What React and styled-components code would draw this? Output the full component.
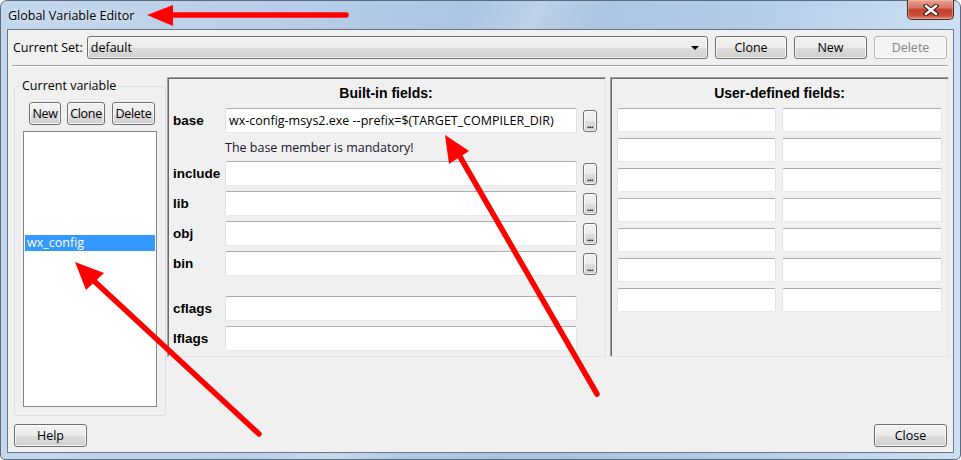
import React from 'react'
import styled, { createGlobalStyle } from 'styled-components'

const GlobalStyle = createGlobalStyle`
  html, body { margin: 0; padding: 0; background: #ffffff; }
  body {
    font-family: "Open Sans", "Noto Sans", sans-serif;
    font-size: 12.5px;
    color: #000;
  }
  * { box-sizing: border-box; }
`

const Stage = styled.div`
  position: relative;
  width: 961px;
  height: 460px;
  overflow: hidden;
`

const Window = styled.div`
  width: 961px;
  height: 460px;
  border: 1px solid #5d6c7f;
  border-radius: 7px 7px 5px 5px;
  background:
    linear-gradient(115deg, rgba(255,255,255,0) 40%, rgba(255,255,255,0.25) 46%, rgba(255,255,255,0) 52%),
    linear-gradient(90deg, #c3d7ed 0%, #b8cee8 30%, #a8c2df 55%, #b4cce6 78%, #cde0f3 100%);
  display: flex;
  flex-direction: column;
  padding: 0 6px 6px;
`

const TitleBar = styled.div`
  height: 28px;
  display: flex;
  justify-content: space-between;
  align-items: flex-start;
`

const Title = styled.div`
  align-self: center;
  padding-left: 1px;
  font-size: 12.5px;
  color: #000;
  text-shadow: 0 0 6px rgba(255,255,255,0.9);
`

const CloseBtn = styled.div`
  width: 47px;
  height: 20px;
  margin-top: -1px;
  border: 1px solid #4d2520;
  border-top: none;
  border-radius: 0 0 5px 5px;
  background: linear-gradient(#e6a396 0%, #d77867 40%, #c2402b 52%, #c94c37 80%, #db8a75 100%);
  box-shadow: inset 0 0 0 1px rgba(255,200,190,0.45);
  display: flex;
  align-items: center;
  justify-content: center;
`

const Client = styled.div`
  flex: 1;
  border: 1px solid #6a788b;
  background: #f0f0f0;
  display: flex;
  flex-direction: column;
`

const TopRow = styled.div`
  display: flex;
  align-items: center;
  height: 23px;
  margin: 6px 6px 0 5px;
`

const SetLabel = styled.span`
  margin-right: 4px;
  white-space: nowrap;
`

const Combo = styled.div`
  flex: 1;
  height: 23px;
  margin-right: 7px;
  border: 1px solid #707070;
  border-radius: 3px;
  background: linear-gradient(#f2f2f2 0%, #ebebeb 50%, #dddddd 51%, #cfcfcf 100%);
  box-shadow: inset 0 0 0 1px rgba(255,255,255,0.7);
  display: flex;
  align-items: center;
  justify-content: space-between;
  padding: 0 8px 0 3px;
`

const ComboArrow = styled.span`
  width: 0;
  height: 0;
  border-left: 4px solid transparent;
  border-right: 4px solid transparent;
  border-top: 4px solid #000;
`

const Button = styled.div`
  width: ${p => p.w}px;
  height: ${p => p.h || 23}px;
  margin-left: ${p => p.ml || 0}px;
  flex: none;
  border: 1px solid ${p => (p.disabled ? '#adb2b5' : '#707070')};
  border-radius: 3px;
  background: ${p => (p.disabled
    ? '#f4f4f4'
    : 'linear-gradient(#f2f2f2 0%, #ebebeb 50%, #dddddd 51%, #cfcfcf 100%)')};
  box-shadow: inset 0 0 0 1px rgba(255,255,255,0.75);
  color: ${p => (p.disabled ? '#838383' : '#000')};
  display: flex;
  align-items: center;
  justify-content: center;
  white-space: nowrap;
  letter-spacing: ${p => (p.tight ? '-0.3px' : '0')};
`

const Browse = styled.div`
  width: 14px;
  height: 22px;
  margin-left: 6px;
  border: 1px solid #707070;
  border-radius: 3px;
  background: linear-gradient(#f2f2f2 0%, #ebebeb 50%, #dddddd 51%, #cfcfcf 100%);
  box-shadow: inset 0 0 0 1px rgba(255,255,255,0.75);
  display: flex;
  align-items: flex-end;
  justify-content: center;
  font-size: 9px;
  line-height: 13px;
  letter-spacing: -0.5px;
  color: #000;
  font-weight: bold;
`

const Separator = styled.div`
  height: 2px;
  margin: 6px 5px 0 4px;
  border-top: 1px solid #a0a0a0;
  border-bottom: 1px solid #ffffff;
`

const Main = styled.div`
  flex: 1;
  display: flex;
  align-items: flex-start;
  margin-top: 10px;
  padding-left: 6px;
`

const Group = styled.fieldset`
  width: 152px;
  height: 338px;
  margin: 1px 0 0 0;
  padding: 0 8px 8px 8px;
  border: 1px solid #d5dfe5;
  border-radius: 3px;
  display: flex;
  flex-direction: column;
  min-width: 0;
`

const Legend = styled.legend`
  padding: 0 2px;
  margin-left: -3px;
  line-height: 16px;
`

const GroupButtons = styled.div`
  display: flex;
  padding-left: 6px;
  margin-top: 8px;
`

const ListBox = styled.div`
  flex: 1;
  margin-top: 6px;
  border: 1px solid #828790;
  background: #fff;
  padding: 103px 1px 0 1px;
`

const ListItem = styled.div`
  height: 16px;
  line-height: 16px;
  padding-left: 2px;
  background: ${p => (p.selected ? '#3399ff' : 'transparent')};
  color: ${p => (p.selected ? '#fff' : '#000')};
`

const Panel = styled.div`
  width: ${p => p.w}px;
  height: 280px;
  margin-left: ${p => p.ml}px;
  border-top: 1px solid #a0a0a0;
  border-left: 1px solid #a0a0a0;
  border-right: 1px solid #e3e3e3;
  border-bottom: 1px solid #e3e3e3;
  box-shadow: inset 1px 1px 0 #696969;
  padding: 6px 6px 0 ${p => p.pl}px;
  display: flex;
  flex-direction: column;
`

const PanelTitle = styled.div`
  text-align: center;
  font-family: "Liberation Sans", Arial, sans-serif;
  font-weight: bold;
  font-size: 14px;
  line-height: 18px;
  color: #000;
`

const FieldRow = styled.div`
  display: flex;
  align-items: center;
  height: 25px;
  margin-top: ${p => p.mt}px;
`

const FieldLabel = styled.div`
  width: 52px;
  font-family: "Liberation Sans", Arial, sans-serif;
  font-weight: bold;
  font-size: 13.5px;
  color: #000;
`

const TextBox = styled.div`
  width: ${p => (p.w ? `${p.w}px` : 'auto')};
  height: ${p => p.h || 24}px;
  background: #fff;
  border: 1px solid #e2e3ea;
  border-top-color: #abadb3;
  border-bottom-color: #e3e9ef;
  border-radius: 2px;
  padding-left: 3px;
  display: flex;
  align-items: center;
  white-space: nowrap;
  overflow: hidden;
`

const Hint = styled.div`
  margin: 7px 0 0 52px;
  height: 16px;
  line-height: 16px;
  color: #1a1530;
`

const UserGrid = styled.div`
  display: grid;
  grid-template-columns: 159px 160px;
  column-gap: 6px;
  row-gap: 6px;
  margin-top: 6px;
`

const BottomRow = styled.div`
  display: flex;
  justify-content: space-between;
  margin: 8px 6px 5px 6px;
`

const Overlay = styled.svg`
  position: absolute;
  left: 0;
  top: 0;
  pointer-events: none;
`

const builtIn = [
  { name: 'include', mt: 5, browse: true },
  { name: 'lib', mt: 5, browse: true },
  { name: 'obj', mt: 5, browse: true },
  { name: 'bin', mt: 5, browse: true },
  { name: 'cflags', mt: 20 },
  { name: 'lflags', mt: 5 },
]

export default function App() {
  return (
    <Stage>
      <GlobalStyle />
      <Window>
        <TitleBar>
          <Title>Global Variable Editor</Title>
          <CloseBtn>
            <svg width="16" height="12" viewBox="-8 -6 16 12">
              <path d="M-5,-4 L5,4 M5,-4 L-5,4" stroke="#3a1510" strokeWidth="4.6" strokeLinecap="square" />
              <path d="M-5,-4 L5,4 M5,-4 L-5,4" stroke="#ffffff" strokeWidth="2.4" strokeLinecap="square" />
            </svg>
          </CloseBtn>
        </TitleBar>
        <Client>
          <TopRow>
            <SetLabel>Current Set:</SetLabel>
            <Combo>
              <span>default</span>
              <ComboArrow />
            </Combo>
            <Button w={72}>Clone</Button>
            <Button w={73} ml={7}>New</Button>
            <Button w={73} ml={7} disabled>Delete</Button>
          </TopRow>
          <Separator />
          <Main>
            <Group>
              <Legend>Current variable</Legend>
              <GroupButtons>
                <Button w={32} tight>New</Button>
                <Button w={38} ml={6} tight>Clone</Button>
                <Button w={43} ml={7} tight>Delete</Button>
              </GroupButtons>
              <ListBox>
                <ListItem selected>wx_config</ListItem>
              </ListBox>
            </Group>
            <Panel w={439} ml={1} pl={5}>
              <PanelTitle>Built-in fields:</PanelTitle>
              <FieldRow mt={6}>
                <FieldLabel>base</FieldLabel>
                <TextBox w={352} h={25}>wx-config-msys2.exe --prefix=$(TARGET_COMPILER_DIR)</TextBox>
                <Browse>...</Browse>
              </FieldRow>
              <Hint>The base member is mandatory!</Hint>
              {builtIn.map(f => (
                <FieldRow key={f.name} mt={f.mt}>
                  <FieldLabel>{f.name}</FieldLabel>
                  <TextBox w={352} h={25} />
                  {f.browse && <Browse>...</Browse>}
                </FieldRow>
              ))}
            </Panel>
            <Panel w={339} ml={4} pl={6}>
              <PanelTitle>User-defined fields:</PanelTitle>
              <UserGrid>
                {Array.from({ length: 14 }).map((_, i) => (
                  <TextBox key={i} />
                ))}
              </UserGrid>
            </Panel>
          </Main>
          <BottomRow>
            <Button w={73}>Help</Button>
            <Button w={73}>Close</Button>
          </BottomRow>
        </Client>
      </Window>
      <Overlay width="961" height="460" viewBox="0 0 961 460">
        <g fill="#ff0000" stroke="#ff0000" strokeLinecap="round" strokeWidth="5.5">
          <line x1="346" y1="15" x2="166" y2="15" />
          <polygon points="147,15 173,5 173,26" stroke="none" />
          <line x1="259" y1="434" x2="93" y2="280" />
          <polygon points="75,262 104,273 86,290" stroke="none" />
          <line x1="597" y1="394" x2="459" y2="155" />
          <polygon points="445,135 469,151 449,164" stroke="none" />
        </g>
      </Overlay>
    </Stage>
  )
}
